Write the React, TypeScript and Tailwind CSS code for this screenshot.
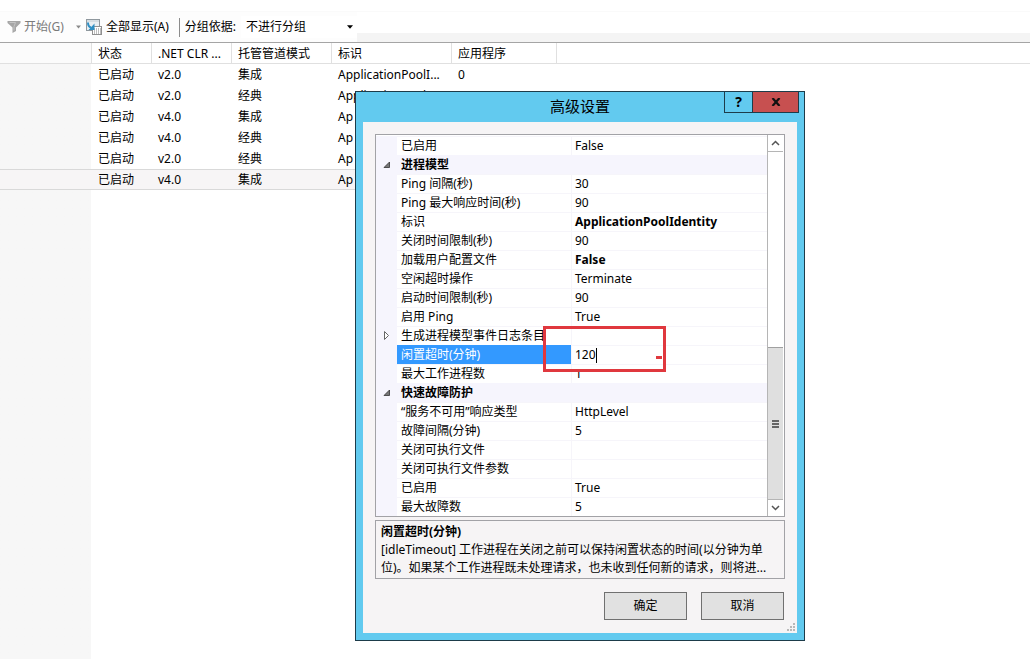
import React, { useState } from 'react';
import clsx from 'clsx';

interface Pool {
  status: string;
  clr: string;
  mode: string;
  identity: string;
  apps?: string;
}

interface PropertyRow {
  id: string;
  label: string;
  value?: string;
  category?: boolean;
  collapsed?: boolean;
  bold?: boolean;
  editing?: boolean;
}

const columns = ['状态', '.NET CLR ...', '托管管道模式', '标识', '应用程序'];

const pools: Pool[] = [
  { status: '已启动', clr: 'v2.0', mode: '集成', identity: 'ApplicationPoolI...', apps: '0' },
  { status: '已启动', clr: 'v2.0', mode: '经典', identity: 'ApplicationPoolI...' },
  { status: '已启动', clr: 'v4.0', mode: '集成', identity: 'Ap' },
  { status: '已启动', clr: 'v4.0', mode: '经典', identity: 'Ap' },
  { status: '已启动', clr: 'v2.0', mode: '经典', identity: 'Ap' },
  { status: '已启动', clr: 'v4.0', mode: '集成', identity: 'Ap' },
];

const properties: PropertyRow[] = [
  { id: 'cpu-enabled', label: '已启用', value: 'False' },
  { id: 'process-model', label: '进程模型', category: true },
  { id: 'ping-interval', label: 'Ping 间隔(秒)', value: '30' },
  { id: 'ping-response', label: 'Ping 最大响应时间(秒)', value: '90' },
  { id: 'identity', label: '标识', value: 'ApplicationPoolIdentity', bold: true },
  { id: 'shutdown-limit', label: '关闭时间限制(秒)', value: '90' },
  { id: 'load-profile', label: '加载用户配置文件', value: 'False', bold: true },
  { id: 'idle-action', label: '空闲超时操作', value: 'Terminate' },
  { id: 'startup-limit', label: '启动时间限制(秒)', value: '90' },
  { id: 'ping-enabled', label: '启用 Ping', value: 'True' },
  { id: 'event-log', label: '生成进程模型事件日志条目', collapsed: true },
  { id: 'idle-timeout', label: '闲置超时(分钟)', value: '120', editing: true },
  { id: 'max-processes', label: '最大工作进程数', value: '1' },
  { id: 'rapid-fail', label: '快速故障防护', category: true },
  { id: 'unavailable', label: '“服务不可用”响应类型', value: 'HttpLevel' },
  { id: 'fail-interval', label: '故障间隔(分钟)', value: '5' },
  { id: 'shutdown-exe', label: '关闭可执行文件', value: '' },
  { id: 'shutdown-args', label: '关闭可执行文件参数', value: '' },
  { id: 'fail-enabled', label: '已启用', value: 'True' },
  { id: 'max-failures', label: '最大故障数', value: '5' },
];

const FilterIcon = () => (
  <svg width="14" height="14" viewBox="0 0 14 14" className="shrink-0">
    <path d="M0.5 1h13v2L9 7.5v3.500L5.500 13V7.500L0.500 3z" fill="#a6a6a6" />
    <path d="M2.500 2.500h6L7 6.500v4" fill="none" stroke="#c4c4c4" />
  </svg>
);

const ShowAllIcon = () => (
  <svg width="16" height="16" viewBox="0 0 16 16" className="shrink-0">
    <rect x="0.500" y="0.500" width="13" height="11" fill="#e9eff3" stroke="#8f989e" />
    <path d="M1 2h12" stroke="#c3ccd2" />
    <rect x="6.500" y="7.500" width="9" height="8" fill="#fff" stroke="#909090" />
    <path d="M8 10h7M8 12h7M8 14h7" stroke="#7d7d7d" strokeDasharray="1 1" />
    <path d="M2 3.500c0 3 1 4.500 3 5" fill="none" stroke="#2f8fc4" strokeWidth="2" />
    <path d="M8.500 4.500v6.500H2.500z" fill="#2f8fc4" />
  </svg>
);

const DropArrow = ({ className }: { className?: string }) => (
  <svg width="7" height="4" viewBox="0 0 7 4" className={clsx('shrink-0', className)}>
    <path d="M0 0h7L3.500 4z" fill="currentColor" />
  </svg>
);

const Toolbar = () => (
  <div className="mt-[11px] flex h-[31px] items-stretch border-t border-[#fafafa] bg-linear-to-b from-white from-[21px] to-[#f4f4f4] to-[21px]">
    <div className="flex items-center bg-[#fdfdfd] pl-[7px]">
      <button className="flex items-center gap-[3px] text-[#7a7a7a]">
        <FilterIcon />
        开始(G)
      </button>
      <DropArrow className="ml-3 w-[5px] text-[#8a8a8a]" />
      <button className="ml-[5px] flex items-center gap-1">
        <ShowAllIcon />
        全部显示(A)
      </button>
      <span className="ml-[10px] h-[19px] w-px bg-[#8c8c8c]" />
      <label htmlFor="group-by" className="ml-[5px]">分组依据:</label>
      <div className="relative ml-[5px] flex h-[22px] w-[116px] items-center">
        <select id="group-by" className="h-full w-full appearance-none bg-white pl-[5px] outline-none">
          <option>不进行分组</option>
        </select>
        <DropArrow className="pointer-events-none absolute right-1 w-[6px]" />
      </div>
    </div>
  </div>
);

const PoolTable = () => (
  <table className="w-full table-fixed border-separate border-spacing-0 text-left">
    <colgroup>
      <col className="w-[92px]" />
      <col className="w-[60px]" />
      <col className="w-[80px]" />
      <col className="w-[100px]" />
      <col className="w-[120px]" />
      <col className="w-[105px]" />
      <col />
    </colgroup>
    <thead>
      <tr className="h-[21px]">
        <th className="border-r border-b border-[#e0e0e0] bg-[#fbfbfb] p-0" />
        {columns.map((name) => (
          <th
            key={name}
            className="truncate border-r border-b border-[#e0e0e0] pt-[2px] pr-0 pb-0 pl-[6px] font-normal"
          >
            {name}
          </th>
        ))}
        <th className="border-b border-[#e0e0e0] p-0" />
      </tr>
    </thead>
    <tbody>
      {pools.map((pool, i) => {
        const selected = i === pools.length - 1;
        const cell = clsx(
          'py-0 pr-0 whitespace-nowrap',
          selected && 'border-y border-[#d9d9d9] bg-[#f7f5f6]',
        );
        return (
          <tr key={i} className="h-[21px]">
            <td className={cell} />
            <td className={clsx(cell, 'pl-[6px]')}>{pool.status}</td>
            <td className={clsx(cell, 'pl-[6px]')}>{pool.clr}</td>
            <td className={clsx(cell, 'pl-[6px]')}>{pool.mode}</td>
            <td className={clsx(cell, 'pl-[6px]')}>{pool.identity}</td>
            <td className="py-0 pr-0 pl-[6px]">{pool.apps}</td>
            <td className="p-0" />
          </tr>
        );
      })}
    </tbody>
  </table>
);

const Expander = ({ open }: { open: boolean }) => (
  <svg width="7" height="9" viewBox="0 0 7 9" className="mx-auto">
    {open ? (
      <path d="M6.500 2v5.500H1z" fill="#777" stroke="#333" strokeWidth="0.800" />
    ) : (
      <path d="M1.500 0.500v8L5.500 4.500z" fill="#fff" stroke="#666" />
    )}
  </svg>
);

const PropertyGrid = () => {
  const [timeout, setTimeoutValue] = useState('120');

  return (
    <table className="min-w-0 flex-1 table-fixed border-separate border-spacing-0 pt-px text-left">
      <colgroup>
        <col className="w-[21px]" />
        <col className="w-[174px]" />
        <col />
      </colgroup>
      <tbody>
        {properties.map((row) => {
          if (row.category) {
            return (
              <tr key={row.id} className="h-[19px] bg-[#f6f5fd]">
                <td className="p-0"><Expander open /></td>
                <th colSpan={2} className="py-0 pr-0 pl-1 font-bold">{row.label}</th>
              </tr>
            );
          }
          return (
            <tr key={row.id} className="h-[19px]">
              <td className="bg-[#f6f5fd] p-0">{row.collapsed && <Expander open={false} />}</td>
              <th
                className={clsx(
                  'border-t py-0 pr-0 pl-1 font-normal whitespace-nowrap',
                  row.editing ? 'border-[#3399ff] bg-[#3399ff] text-white' : 'border-[#f6f5fa]',
                )}
              >
                {row.editing ? <label htmlFor={row.id}>{row.label}</label> : row.label}
              </th>
              <td className={clsx('border-t border-l border-[#f6f5fa] py-0 pr-0 pl-[3px]', row.bold && 'font-bold')}>
                {row.editing ? (
                  <div className="flex items-center">
                    <input
                      id={row.id}
                      value={timeout}
                      onChange={(e) => setTimeoutValue(e.target.value)}
                      className="h-[18px] w-[21px] bg-transparent outline-none"
                    />
                    <span className="h-[15px] w-px bg-black" />
                  </div>
                ) : (
                  row.value
                )}
              </td>
            </tr>
          );
        })}
      </tbody>
    </table>
  );
};

const ScrollBar = () => (
  <div className="flex w-[17px] flex-col border-l border-[#b5b5b5] bg-white pr-px text-[#555]">
    <button aria-label="向上滚动" className="flex h-[17px] items-center justify-center border-b border-[#b5b5b5]">
      <svg width="9" height="6" viewBox="0 0 9 6"><path d="M1 5l3.500-3.500L8 5" fill="none" stroke="currentColor" strokeWidth="1.500" /></svg>
    </button>
    <div className="flex-[196]" />
    <div className="flex flex-[151] flex-col items-center justify-center gap-px border-t border-[#a0a0a0] bg-[#dfdfdf]">
      <span className="h-0.5 w-[7px] bg-[#666]" />
      <span className="h-0.5 w-[7px] bg-[#666]" />
      <span className="h-0.5 w-[7px] bg-[#666]" />
    </div>
    <button aria-label="向下滚动" className="flex h-[17px] items-center justify-center border-t border-[#b5b5b5]">
      <svg width="9" height="6" viewBox="0 0 9 6"><path d="M1 1l3.500 3.500L8 1" fill="none" stroke="currentColor" strokeWidth="1.500" /></svg>
    </button>
  </div>
);

const SettingsDialog = () => (
  <div
    role="dialog"
    aria-labelledby="dialog-title"
    className="absolute top-[91px] left-[355px] w-[450px] border border-[#1d3c4a] bg-[#62caef] px-[7px] pb-[7px]"
  >
    <div className="relative h-[30px]">
      <h1 id="dialog-title" className="text-center text-[15px] leading-[28px]">高级设置</h1>
      <div className="absolute top-0 -right-[2px] flex h-[21px] border-x border-b border-[#1d3c4a] font-bold">
        <button aria-label="帮助" className="w-[27px] text-sm leading-none">?</button>
        <button aria-label="关闭" className="flex w-[46px] items-center justify-center border-l border-[#1d3c4a] bg-[#c75050]">
          <svg width="10" height="8" viewBox="0 0 10 8"><path d="M1.500 0L8.500 8M8.500 0L1.500 8" stroke="#111" strokeWidth="2.200" /></svg>
        </button>
      </div>
    </div>

    <div className="relative bg-[#f6f4f5] px-3 pt-3 pb-[13px]">
      <div className="flex border border-[#a2a2a6] bg-white">
        <PropertyGrid />
        <ScrollBar />
      </div>

      <div className="mt-[3px] h-[59px] border border-[#a2a2a6] px-[5px] pt-[2px] leading-[18px]">
        <p className="font-bold">闲置超时(分钟)</p>
        <p className="line-clamp-2">
          [idleTimeout] 工作进程在关闭之前可以保持闲置状态的时间(以分钟为单位)。如果某个工作进程既未处理请求，也未收到任何新的请求，则将进...
        </p>
      </div>

      <div className="mt-[13px] flex justify-end gap-[14px] pr-px">
        <button className="h-[28px] w-[83px] border border-[#707070] bg-[#e1e1e1]">确定</button>
        <button className="h-[28px] w-[83px] border border-[#707070] bg-[#e1e1e1]">取消</button>
      </div>

      <svg width="9" height="9" viewBox="0 0 9 9" className="absolute right-[1px] bottom-[1px]" fill="#b8b8b8">
        <path d="M6 0h2v2H6zM3 3h2v2H3zM6 3h2v2H6zM0 6h2v2H0zM3 6h2v2H3zM6 6h2v2H6z" />
      </svg>
    </div>

    {/* Red marker around the timeout value */}
    <div className="pointer-events-none absolute top-[234px] left-[187px] h-[46px] w-[123px] border-[3px] border-[#e0383e]">
      <span className="absolute right-px bottom-[10px] h-[3px] w-[6px] bg-[#e0383e]" />
    </div>
  </div>
);

export default function App() {
  return (
    <div className="relative flex min-h-screen flex-col overflow-hidden bg-white font-['Noto_Sans','Noto_Sans_CJK_SC',sans-serif] text-[12px] leading-[18px] text-black">
      <Toolbar />
      <main className="flex flex-1 flex-col border-t border-[#a5a5a5] bg-linear-to-r from-[#f7f7f7] from-[91px] to-white to-[91px]">
        <PoolTable />
      </main>
      <SettingsDialog />
    </div>
  );
}
